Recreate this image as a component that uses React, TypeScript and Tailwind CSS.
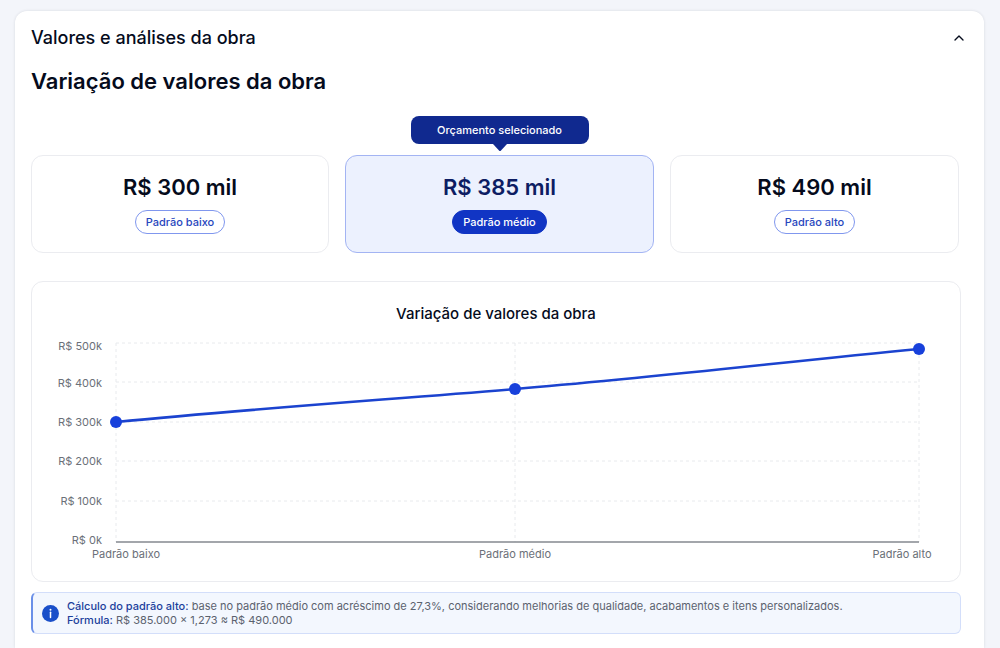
import { useState } from "react"

import { clsx } from "clsx"
import { ChevronUp } from "lucide-react"

type Budget = {
  value: string
  label: string
  isSelected?: boolean
}

const budgets: Budget[] = [
  { value: "R$ 300 mil", label: "Padrão baixo" },
  { value: "R$ 385 mil", label: "Padrão médio", isSelected: true },
  { value: "R$ 490 mil", label: "Padrão alto" },
]

const yTicks = [
  { label: "R$ 500k", y: 13, labelY: 20 },
  { label: "R$ 400k", y: 52, labelY: 57 },
  { label: "R$ 300k", y: 92, labelY: 96 },
  { label: "R$ 200k", y: 131, labelY: 135 },
  { label: "R$ 100k", y: 171, labelY: 175 },
  { label: "R$ 0k", y: 212, labelY: 214 },
]

const points = [
  { label: "Padrão baixo", x: 84, y: 92, labelX: 94 },
  { label: "Padrão médio", x: 483, y: 59, labelX: 483 },
  { label: "Padrão alto", x: 887, y: 19, labelX: 870 },
]

const BudgetCard = ({ value, label, isSelected = false }: Budget) => (
  <div
    className={clsx(
      "relative flex flex-col items-center gap-2 rounded-xl border pt-4 pb-[18px]",
      isSelected ? "border-[#a3b4f3] bg-[#ecf1fe]" : "border-[#ebecf0] bg-white"
    )}
  >
    {isSelected && (
      <div className="absolute bottom-full left-1/2 mb-3 flex h-7 w-[178px] -translate-x-1/2 items-center justify-center rounded-lg bg-[#10298f] text-[11px] font-medium text-white">
        Orçamento selecionado
        <svg className="absolute top-full left-1/2 -translate-x-1/2" width="14" height="7" viewBox="0 0 14 7" aria-hidden="true">
          <path d="M0 0h14L8 6.4a1.4 1.4 0 0 1-2 0z" fill="#10298f" />
        </svg>
      </div>
    )}

    <strong className={clsx("text-[22px] leading-[30px] font-semibold", isSelected ? "text-[#0d1d63]" : "text-[#050b1c]")}>
      {value}
    </strong>

    <span
      className={clsx(
        "flex h-6 items-center rounded-full border px-[10px] text-[11px] font-medium",
        isSelected ? "border-[#1135c4] bg-[#1135c4] text-white" : "border-[#8097ee] text-[#2746bd]"
      )}
    >
      {label}
    </span>
  </div>
)

const VariationChart = () => (
  <svg viewBox="0 0 928 244" className="block w-full" role="img" aria-label="Variação de valores da obra por padrão">
    <g stroke="#e8eaed" strokeDasharray="3 3">
      {yTicks.slice(0, -1).map(tick => (
        <line key={tick.label} x1="84" x2="887" y1={tick.y} y2={tick.y} />
      ))}
      {points.map(point => (
        <line key={point.label} x1={point.x} x2={point.x} y1="13" y2="212" />
      ))}
    </g>

    <line x1="84" x2="887" y1="212" y2="212" stroke="#85888f" strokeWidth="1.5" />

    <g fill="#6b7078" fontSize="11">
      {yTicks.map(tick => (
        <text key={tick.label} x="70" y={tick.labelY} textAnchor="end">{tick.label}</text>
      ))}
      {points.map(point => (
        <text key={point.label} x={point.labelX} y="228" textAnchor="middle">{point.label}</text>
      ))}
    </g>

    <path
      d="M84 92C217 79 350 70 483 59C618 48 752 32 887 19"
      fill="none"
      stroke="#1b43cf"
      strokeWidth="2.5"
    />
    {points.map(point => (
      <circle key={point.label} cx={point.x} cy={point.y} r="6" fill="#1740db" />
    ))}
  </svg>
)

export default function App() {
  const [isOpen, setIsOpen] = useState(true)

  function toggleIsOpen() {
    setIsOpen(!isOpen)
  }

  return (
    <main className="flex min-h-screen flex-col bg-[#f3f5fa] pt-[11px] pr-4 pl-[15px] font-['Inter',sans-serif] text-[#050b1c]">
      <section className="flex-1 rounded-t-xl bg-white pr-[23px] pb-[14px] pl-4 shadow-[0_0_3px_rgba(15,23,42,0.12)]">
        <h2>
          <button
            type="button"
            onClick={toggleIsOpen}
            aria-expanded={isOpen}
            aria-controls="work-values"
            className="flex w-full cursor-pointer items-center justify-between pt-[13px] text-left text-lg font-medium"
          >
            Valores e análises da obra
            <ChevronUp className={clsx("-mr-[6px] size-4", !isOpen && "rotate-180")} aria-hidden="true" />
          </button>
        </h2>

        {isOpen && (
          <div id="work-values">
            <h3 className="pt-[14px] text-[22px] leading-[30px] font-semibold">Variação de valores da obra</h3>

            <div className="mt-[59px] grid grid-cols-[298fr_309fr_289fr] gap-4 pr-[2px]">
              {budgets.map(budget => (
                <BudgetCard key={budget.label} {...budget} />
              ))}
            </div>

            <div className="mt-7 rounded-xl border border-[#ebecf0] pt-5 pb-[7px]">
              <h4 className="mb-1 text-center text-[15px] leading-6 font-medium">Variação de valores da obra</h4>
              <VariationChart />
            </div>

            <div className="mt-[10px] flex items-center gap-2 rounded-md border border-l-2 border-[#d3defa] border-l-[#6a8fe8] bg-[#f3f7fe] py-[6px] pl-[9px]">
              <svg className="size-[17px] shrink-0" viewBox="0 0 17 17" aria-hidden="true">
                <circle cx="8.5" cy="8.5" r="8.5" fill="#1a4fc9" />
                <circle cx="8.5" cy="4.8" r="1" fill="#fff" />
                <path d="M8.5 7.3v5.2" stroke="#fff" strokeWidth="1.5" strokeLinecap="round" />
              </svg>
              <div className="text-[11px] leading-[14px] text-[#5b626e]">
                <p><b className="font-medium text-[#1c3f9c]">Cálculo do padrão alto:</b> base no padrão médio com acréscimo de 27,3%, considerando melhorias de qualidade, acabamentos e itens personalizados.</p>
                <p><b className="font-medium text-[#1c3f9c]">Fórmula:</b> R$ 385.000 × 1,273 ≈ R$ 490.000</p>
              </div>
            </div>
          </div>
        )}
      </section>
    </main>
  )
}
